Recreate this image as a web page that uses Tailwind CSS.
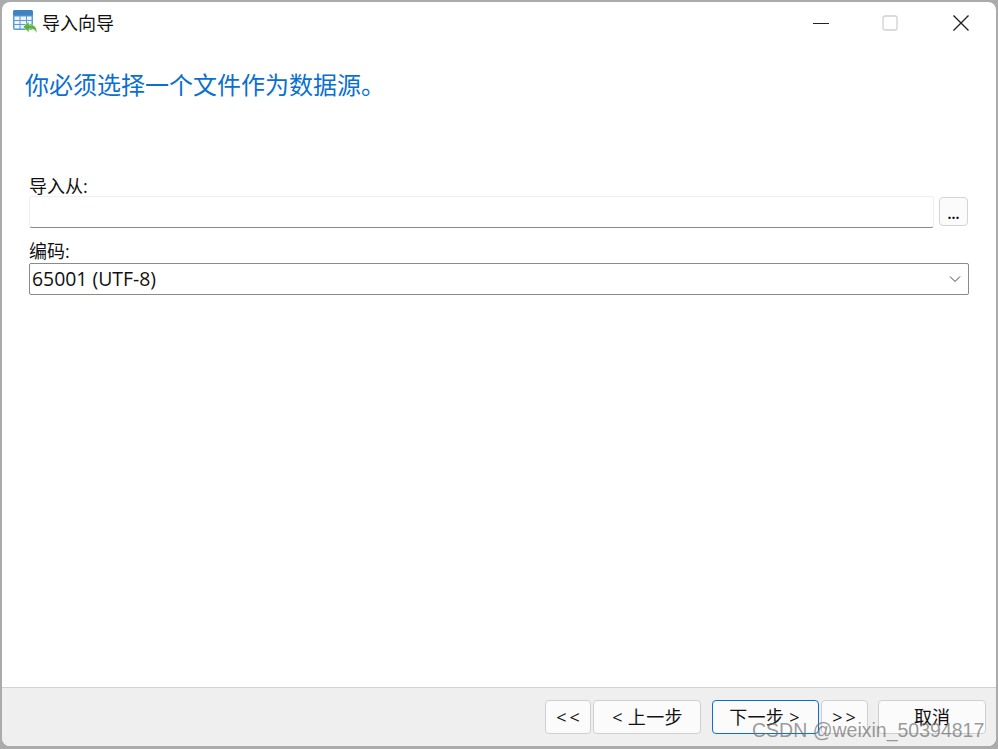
<!DOCTYPE html>
<html lang="zh">
<head>
<meta charset="utf-8">
<script src="https://cdn.jsdelivr.net/npm/@tailwindcss/browser@4"></script>
</head>
<body class="bg-[#ababab] overflow-hidden">
<div class="relative w-[998px] h-[749px] p-[2px] pb-[3px] font-['Open_Sans','Noto_Sans_CJK_SC',sans-serif] text-[#111]">
  <div class="w-full h-full bg-white rounded-[8px] overflow-hidden flex flex-col">
    <!-- Title bar -->
    <div class="h-[42px] shrink-0 flex items-center pl-[11px]">
      <svg class="w-[25px] h-[25px] shrink-0 -mt-[1px]" viewBox="0 0 25 25">
        <rect x="0" y="0" width="20" height="20" rx="2" fill="#5b9bd5"/>
        <rect x="0" y="0" width="20" height="5.500" rx="2" fill="#3f82bf"/>
        <path d="M1.500 6.500h5v3.500h-5zM7.500 6.500h5.500v3.500H7.500zM14 6.500h4.500v3.500H14zM1.500 11h5v3h-5zM7.500 11h5.500v3H7.500zM14 11h4.500v3H14zM1.500 15h5v3.500h-5zM7.500 15h5.500v3.500H7.500zM14 15h4.500v3.500H14z" fill="#edf4fb"/>
        <path d="M10 17l6-5.500v3.500h2.500c3.500 0 5.500 3 5.500 8.500-1.500-3-3-4.500-5.500-4.500H16v3.500z" fill="#5cb531" stroke="#fff" stroke-width="0.500"/>
      </svg>
      <span class="ml-[4px] text-[18px] leading-none">导入向导</span>
      <div class="ml-auto flex items-center h-full">
        <svg class="w-[18px] h-[18px]" viewBox="0 0 18 18"><path d="M0 9.500h16" stroke="#222" stroke-width="1" fill="none"/></svg>
        <svg class="ml-[51px] w-[16px] h-[16px]" viewBox="0 0 16 16"><rect x="1" y="1" width="14" height="14" rx="2" fill="none" stroke="#d0d0d0" stroke-width="1.300"/></svg>
        <svg class="ml-[54px] mr-[26px] w-[18px] h-[18px]" viewBox="0 0 18 18"><path d="M1.500 1.500l15 15M16.500 1.500l-15 15" stroke="#222" stroke-width="1.400" fill="none"/></svg>
      </div>
    </div>
    <!-- Heading -->
    <div class="h-[83px] shrink-0 pl-[23px] pt-[25px]">
      <h1 class="text-[24px] leading-[32px] text-[#0a6fd0] font-normal">你必须选择一个文件作为数据源。</h1>
    </div>
    <!-- Form -->
    <div class="flex-1 pl-[27px] pr-[27px] pt-[47px] flex flex-col">
      <label class="text-[18px] leading-[24px] block h-[22px]">导入从:</label>
      <div class="flex items-start">
        <div class="flex-1 h-[32px] bg-white border border-[#efefef] border-b-[#8a8a8a] rounded-[3px]"></div>
        <button class="ml-[5px] mt-[1px] w-[29px] h-[29px] mr-[1px] bg-[#fbfbfb] border border-[#d4d4d4] rounded-[4px] text-[14px] leading-none font-bold pt-[4px]">...</button>
      </div>
      <label class="mt-[11px] text-[18px] leading-[24px] block h-[25px] -mb-[1px]">编码:</label>
      <div class="h-[32px] border border-[#8a8a8a] rounded-[2px] flex items-center pl-[2px] pr-[7px] bg-white">
        <span class="text-[19.400px] leading-none -mt-[1px]">65001 (UTF-8)</span>
        <svg class="ml-auto w-[12px] h-[8px]" viewBox="0 0 12 8"><path d="M1 1.500l5 5 5-5" stroke="#444" stroke-width="1" fill="none"/></svg>
      </div>
    </div>
    <!-- Footer -->
    <div class="h-[59px] shrink-0 bg-[#efefef] border-t border-[#d2d2d2] flex items-start pt-[12px] pr-[10px] justify-end text-[18px]">
      <button class="w-[46px] h-[34px] pl-[3px] bg-[#fbfbfb] border border-[#cfcfcf] rounded-[4px] leading-none tracking-[3px]">&lt;&lt;</button>
      <button class="ml-[2px] w-[108px] h-[34px] pl-[1px] bg-[#fbfbfb] border border-[#cfcfcf] rounded-[4px] leading-none tracking-[0.300px]">&lt; 上一步</button>
      <button class="ml-[11px] w-[107px] h-[34px] pr-[2px] bg-[#fbfbfb] border border-[#0a6fd0] rounded-[4px] leading-none tracking-[0.300px]">下一步 &gt;</button>
      <button class="ml-[2px] w-[47px] h-[34px] pl-[2px] bg-[#fbfbfb] border border-[#cfcfcf] rounded-[4px] leading-none tracking-[3px]">&gt;&gt;</button>
      <button class="ml-[10px] w-[108px] h-[34px] bg-[#fbfbfb] border border-[#cfcfcf] rounded-[4px] leading-none">取消</button>
    </div>
  </div>
  <!-- Watermark -->
  <div class="absolute left-[752px] top-[720px] text-[19.500px] leading-[20px] text-[#6e6e6e]/70 font-['Liberation_Sans',sans-serif] whitespace-nowrap">CSDN @weixin_50394817</div>
</div>
</body>
</html>
